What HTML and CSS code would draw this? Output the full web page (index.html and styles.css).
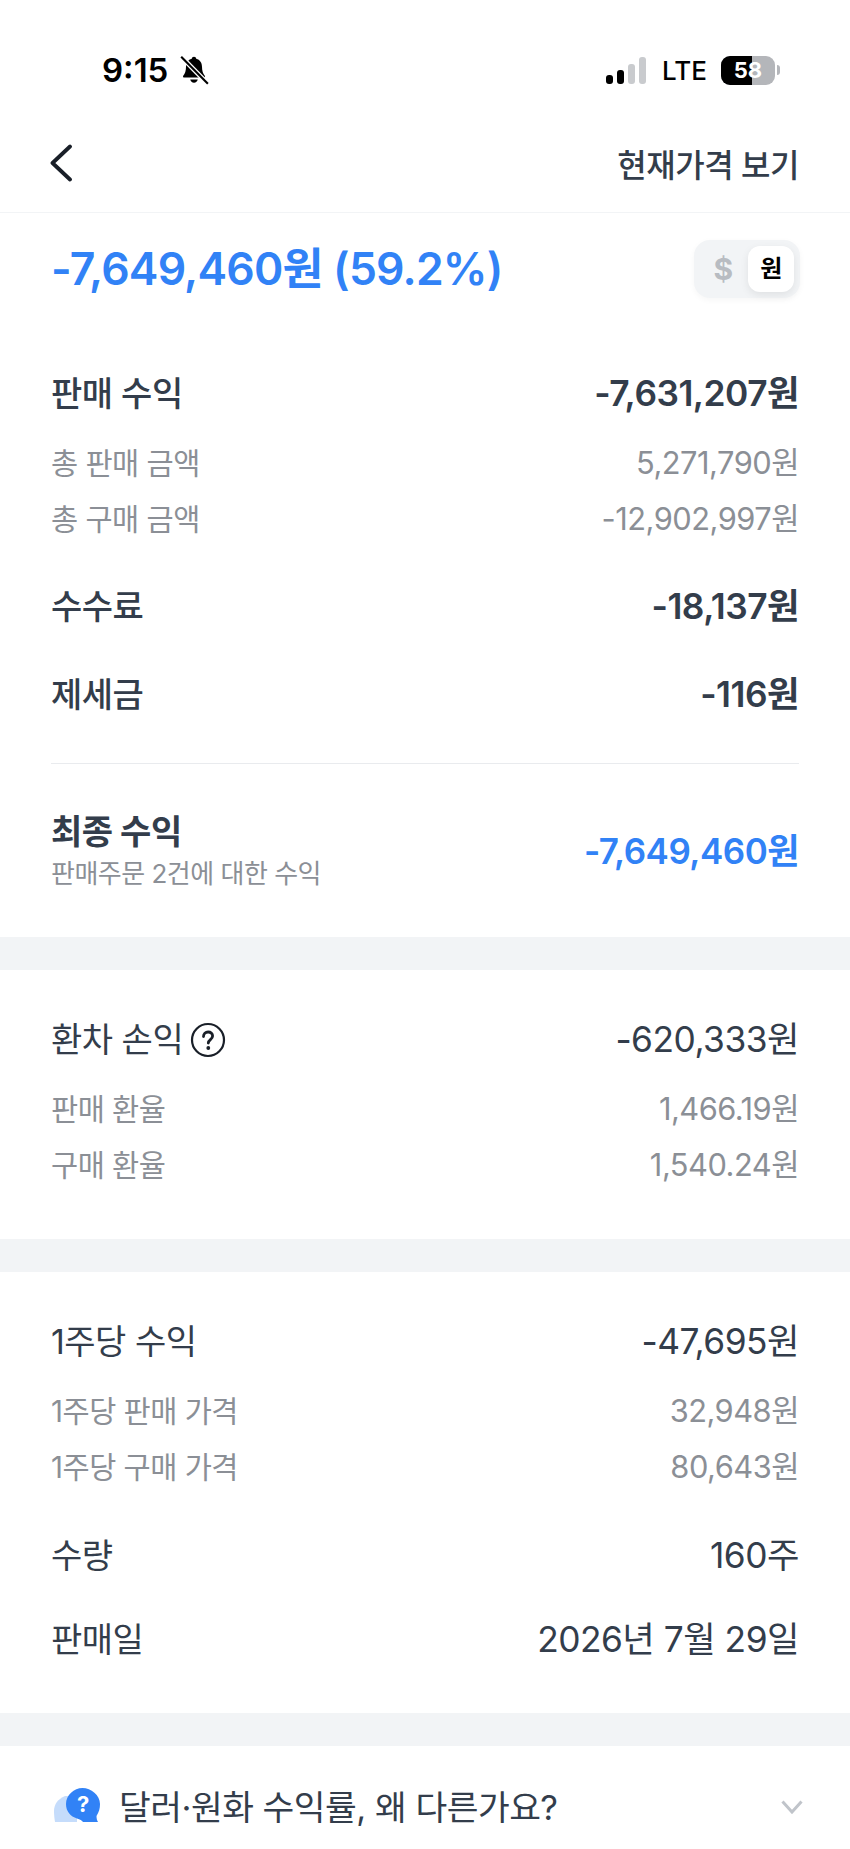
FILE: index.html

```html
<!DOCTYPE html>
<html lang="ko">
<head>
  <meta charset="UTF-8" />
  <meta name="viewport" content="width=device-width,initial-scale=1.0"/>
  <title>판매 수익</title>
  <link rel="stylesheet" href="styles.css">
</head>
<body>
  <div class="statusbar">
    <div class="status-left">
      <span class="time">9:15</span>
      <svg class="bell" viewBox="0 0 30 30">
        <path d="M15 2.500c-1.200 0-2 .8-2.100 1.900-3.500.9-5.400 3.800-5.400 7.600 0 4-.9 6.200-2.600 8.300-.5.7 0 1.700.9 1.700h18.400c.9 0 1.400-1 .9-1.700-1.700-2.100-2.600-4.300-2.600-8.300 0-3.800-1.900-6.700-5.400-7.600-.1-1.100-.9-1.900-2.100-1.900z" fill="#000"/>
        <path d="M11.500 24c.3 1.800 1.700 3 3.500 3s3.200-1.200 3.500-3z" fill="#000"/>
        <path d="M3 2.500 28 28" stroke="#fff" stroke-width="4.500"/>
        <path d="M3 2.500 28 28" stroke="#000" stroke-width="2"/>
      </svg>
    </div>
    <div class="status-right">
      <div class="signal">
        <i class="on s1"></i><i class="on s2"></i><i class="s3"></i><i class="s4"></i>
      </div>
      <span class="lte">LTE</span>
      <div class="battery"><div class="battery-fill"></div><span>58</span></div>
      <div class="battery-tip"></div>
    </div>
  </div>

  <header class="topbar">
    <svg class="back" width="24" height="38" viewBox="0 0 24 38">
      <path d="M21 2.500 3.500 19 21 35.500" fill="none" stroke="#191f28" stroke-width="3.800" stroke-linecap="round" stroke-linejoin="round"/>
    </svg>
    <span class="topbar-link">현재가격 보기</span>
  </header>

  <section class="headline">
    <h1>-7,649,460원 (59.2%)</h1>
    <div class="toggle">
      <span class="toggle-off">$</span>
      <span class="toggle-on">원</span>
    </div>
  </section>

  <section class="block block-first">
    <div class="row bold"><span>판매 수익</span><span class="value">-7,631,207원</span></div>
    <div class="sub-rows">
      <div class="row sub"><span>총 판매 금액</span><span class="value">5,271,790원</span></div>
      <div class="row sub"><span>총 구매 금액</span><span class="value">-12,902,997원</span></div>
    </div>
    <div class="row bold row-gap"><span>수수료</span><span class="value">-18,137원</span></div>
    <div class="row bold row-gap"><span>제세금</span><span class="value">-116원</span></div>
    <div class="total">
      <div>
        <div class="total-title">최종 수익</div>
        <div class="total-note">판매주문 2건에 대한 수익</div>
      </div>
      <div class="total-value">-7,649,460원</div>
    </div>
  </section>

  <div class="band"></div>

  <section class="block block-fx">
    <div class="row">
      <span class="with-icon">환차 손익
        <svg width="36" height="36" viewBox="0 0 36 36">
          <circle cx="18" cy="18" r="16" fill="none" stroke="#191f28" stroke-width="2.200"/>
          <path d="M13.500 14.500c0-2.800 2-4.500 4.600-4.500s4.500 1.600 4.500 4c0 3.500-4.300 3.600-4.300 7" fill="none" stroke="#191f28" stroke-width="2.800" stroke-linecap="round"/>
          <circle cx="18.300" cy="26" r="1.900" fill="#191f28"/>
        </svg>
      </span>
      <span class="value">-620,333원</span>
    </div>
    <div class="sub-rows">
      <div class="row sub"><span>판매 환율</span><span class="value">1,466.19원</span></div>
      <div class="row sub"><span>구매 환율</span><span class="value">1,540.24원</span></div>
    </div>
  </section>

  <div class="band"></div>

  <section class="block block-last">
    <div class="row"><span>1주당 수익</span><span class="value">-47,695원</span></div>
    <div class="sub-rows">
      <div class="row sub"><span>1주당 판매 가격</span><span class="value">32,948원</span></div>
      <div class="row sub"><span>1주당 구매 가격</span><span class="value">80,643원</span></div>
    </div>
    <div class="row row-gap"><span>수량</span><span class="value">160주</span></div>
    <div class="row row-date"><span>판매일</span><span class="value">2026년 7월 29일</span></div>
  </section>

  <div class="band"></div>

  <section class="faq">
    <svg class="faq-icon" width="46" height="34" viewBox="0 0 46 34">
      <path d="M11 8C4 11 0 16 0 23c0 4 .5 8 1 11h22V8z" fill="#c5dcfb"/>
      <path d="M28.500 0C20 0 12 7 12 16c0 7.500 4.500 12.500 11 14.500 3 .9 5 2 6 3.500h15c-1-1.500-1.500-3.500-1.500-6C45 24 46 20.500 46 16 46 7 37 0 28.500 0z" fill="#3182f6"/>
      <text x="29" y="24" class="faq-mark">?</text>
    </svg>
    <span class="faq-text">달러·원화 수익률, 왜 다른가요?</span>
    <svg class="chevron" width="22" height="14" viewBox="0 0 22 14">
      <path d="M1.500 1.500 11 12 20.500 1.500" fill="none" stroke="#c0c4ca" stroke-width="3"/>
    </svg>
  </section>
</body>
</html>
```

FILE: styles.css

```css
:root {
  --text: #333d4b;
  --dark: #191f28;
  --muted: #8b8f96;
  --blue: #3182f6;
  --band: #f2f4f6;
  --font-base: 'Inter', 'Noto Sans CJK KR', sans-serif;
}
* { box-sizing: border-box; margin: 0; padding: 0; }
body {
  font-family: var(--font-base);
  background: #fff;
  color: var(--text);
  width: 850px;
  height: 1849px;
  overflow: hidden;
  letter-spacing: -0.5px;
}

.statusbar {
  height: 130px;
  padding: 50px 70px 0 102px;
  display: flex;
  justify-content: space-between;
}
.status-left, .status-right { display: flex; align-items: center; height: 40px; }
.time { font-size: 33px; font-weight: 600; color: #000; letter-spacing: 0; }
.bell { margin-left: 10px; width: 32px; height: 32px; }
.signal { display: flex; align-items: flex-end; gap: 4px; height: 27px; }
.signal i { width: 7px; background: #c9cbce; border-radius: 3px; display: block; }
.signal .on { background: #000; }
.signal .s1 { height: 9px; }
.signal .s2 { height: 14px; }
.signal .s3 { height: 20px; }
.signal .s4 { height: 27px; }
.lte { font-size: 26px; font-weight: 500; color: #000; margin-left: 16px; letter-spacing: 0; }
.battery {
  position: relative;
  width: 54px;
  height: 29px;
  margin-left: 14px;
  border-radius: 9px;
  background: #b4b6ba;
  overflow: hidden;
  text-align: center;
}
.battery-fill { position: absolute; left: 0; top: 0; bottom: 0; width: 31px; background: #000; }
.battery span {
  position: relative;
  color: #fff;
  font-size: 22px;
  font-weight: 700;
  line-height: 29px;
  letter-spacing: 0;
}
.battery-tip { width: 3px; height: 10px; margin-left: 2px; background: #b4b6ba; border-radius: 0 3px 3px 0; }

.topbar {
  height: 83px;
  padding: 0 51px 16px 49px;
  display: flex;
  justify-content: space-between;
  align-items: center;
  border-bottom: 1px solid #f2f4f6;
}
.topbar-link { font-size: 32px; font-weight: 500; }

.headline {
  height: 110px;
  padding: 0 50px 6px 51px;
  display: flex;
  justify-content: space-between;
  align-items: center;
}
.headline h1 { font-size: 44.500px; font-weight: 600; color: var(--blue); letter-spacing: -0.8px; }
.toggle {
  width: 106px;
  height: 58px;
  margin-top: 8px;
  padding: 6px;
  background: var(--band);
  border-radius: 16px;
  display: flex;
  align-items: center;
  justify-content: space-between;
  box-shadow: 0 2px 6px rgba(0,0,0,0.04);
}
.toggle-off { width: 46px; text-align: center; color: #b8bcc2; font-size: 30px; font-weight: 700; }
.toggle-on {
  width: 46px;
  height: 46px;
  line-height: 46px;
  text-align: center;
  background: #fff;
  border-radius: 12px;
  box-shadow: 0 3px 8px rgba(0,0,0,0.08);
  color: #000;
  font-size: 24px;
  font-weight: 700;
}

.block { padding: 48px 51px 0; }
.block-first { padding-top: 49px; height: 614px; }
.block-fx { height: 269px; }
.block-last { height: 441px; }
.band { height: 33px; background: var(--band); }

.row {
  display: flex;
  justify-content: space-between;
  align-items: center;
  font-size: 34px;
  line-height: 44px;
  font-weight: 400;
}
.row .value { font-size: 35.300px; font-weight: 400; }
.row.bold span { font-weight: 500; }
.row.bold .value { font-weight: 600; }
.sub-rows { margin-top: 25px; display: flex; flex-direction: column; gap: 12px; }
.row.sub { font-size: 29.500px; color: var(--muted); font-weight: 400; }
.row.sub .value { font-size: 30.800px; }
.row-gap { margin-top: 44px; }
.block-last .row-gap { margin-top: 45px; }
.row-date { margin-top: 40px; }

.total {
  margin-top: 46px;
  padding-top: 46px;
  border-top: 1px solid #e9ebee;
  display: flex;
  justify-content: space-between;
  align-items: center;
}
.total-title { font-size: 34px; font-weight: 700; line-height: 44px; }
.total-note { font-size: 26px; color: var(--muted); line-height: 40px; }
.total-value { font-size: 35px; font-weight: 600; color: var(--blue); padding-bottom: 8px; }

.with-icon { display: flex; align-items: center; gap: 7px; }

.faq {
  height: 118px;
  padding: 0 47px 0 54px;
  display: flex;
  align-items: center;
}
.faq-icon { flex: none; }
.faq-mark { fill: #fff; font-size: 22px; font-weight: 700; text-anchor: middle; }
.faq-text { font-size: 34.500px; margin-left: 19px; }
.chevron { margin-left: auto; margin-top: 4px; }
```
